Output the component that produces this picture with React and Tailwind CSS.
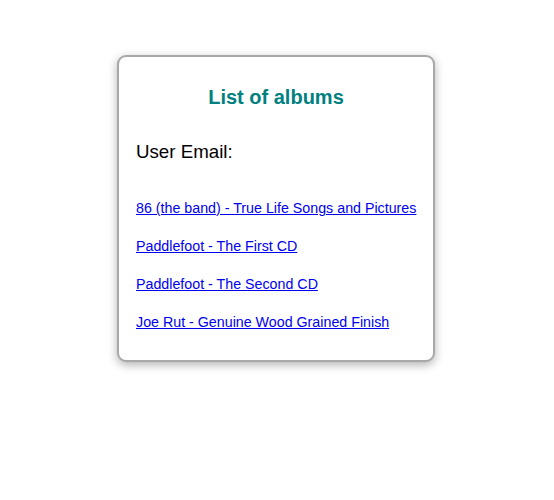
import React from 'react'

const albums = [
  '86 (the band) - True Life Songs and Pictures',
  'Paddlefoot - The First CD',
  'Paddlefoot - The Second CD',
  'Joe Rut - Genuine Wood Grained Finish',
]

const App = () => {
  return (
    <div className="min-h-screen bg-white pt-[55px] font-['Liberation_Sans',Arial,sans-serif]">
      <div className="relative left-[-1px] mx-auto w-[318px] rounded-[9px] border-2 border-[#a8a8a8] bg-white pl-[17px] pr-[10px] pt-[28px] pb-[29px] shadow-[0_3px_10px_rgba(0,0,0,0.3)]">
        <h2 className="pr-[7px] text-center text-[20px] leading-[24px] font-bold text-[#008080]">List of albums</h2>
        <h3 className="mt-[32px] text-[18.72px] leading-[22px] text-black">User Email:</h3>
        <div className="mt-[36px] flex flex-col gap-[20px]">
          {albums.map((a) => (
            <a key={a} href="#" className="block whitespace-nowrap text-[14.25px] leading-[18px] text-[#0000ee] underline">
              {a}
            </a>
          ))}
        </div>
      </div>
    </div>
  )
}

export default App
